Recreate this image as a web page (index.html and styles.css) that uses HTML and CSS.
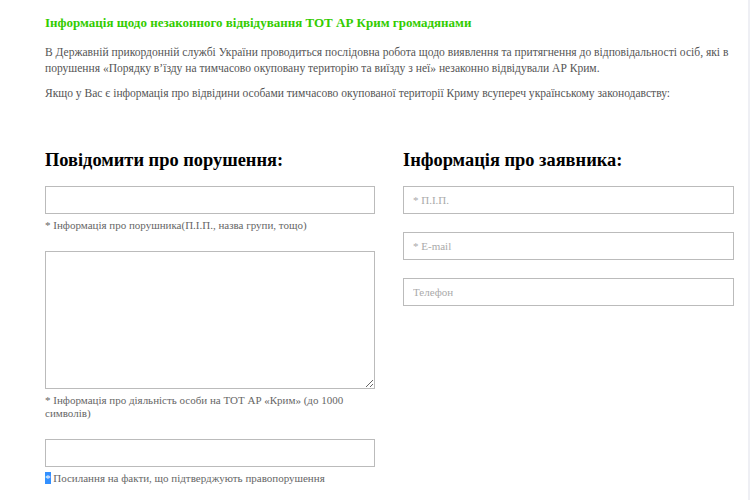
FILE: index.html
```html
<!DOCTYPE html>
<html lang="uk">

<head>
    <meta charset="UTF-8">
    <title>Повідомити про порушення</title>
    <link rel="stylesheet" href="styles.css">
</head>

<body>
    <div class="page">
        <div class="intro">
            <h3>Інформація щодо незаконного відвідування ТОТ АР Крим громадянами</h3>
            <p>В Державній прикордонній службі України проводиться послідовна робота щодо виявлення та притягнення до відповідальності осіб, які в порушення «Порядку в’їзду на тимчасово окуповану територію та виїзду з неї» незаконно відвідували АР Крим.</p>
            <p>Якщо у Вас є інформація про відвідини особами тимчасово окупованої території Криму всупереч українському законодавству:</p>
        </div>

        <form class="report-form">
            <!-- ліва колонка -->
            <div class="col">
                <h2>Повідомити про порушення:</h2>
                <div class="field">
                    <input type="text">
                    <span class="hint">* Інформація про порушника(П.І.П., назва групи, тощо)</span>
                </div>
                <div class="field">
                    <textarea></textarea>
                    <span class="hint">* Інформація про діяльність особи на ТОТ АР «Крим» (до 1000 символів)</span>
                </div>
                <div class="field">
                    <input type="text">
                    <span class="hint"><mark>*</mark> Посилання на факти, що підтверджують правопорушення</span>
                </div>
            </div>

            <!-- права колонка -->
            <div class="col">
                <h2>Інформація про заявника:</h2>
                <div class="contacts">
                    <input type="text" placeholder="* П.І.П.">
                    <input type="email" placeholder="* E-mail">
                    <input type="tel" placeholder="Телефон">
                </div>
            </div>
        </form>
    </div>
</body>

</html>
```

FILE: styles.css
```css
body {
    margin: 0;
    font-family: "Liberation Serif", serif;
    background-color: #fff;
}

.page {
    min-height: 500px;
    box-sizing: border-box;
    padding: 15px 12px 0 45px;
    border-right: 2px solid #eeeff4;
}

.intro h3 {
    margin: 0 0 13px;
    font-size: 13px;
    color: #33cc00;
}

.intro p {
    margin: 0 0 9px;
    font-size: 11.55px;
    line-height: 16px;
    color: #555;
}

.report-form {
    display: grid;
    grid-template-columns: 330px 331px;
    column-gap: 28px;
    margin-top: 47px;
}

.col h2 {
    margin: 0 0 14px;
    font-size: 18.4px;
    line-height: 24px;
    color: #000;
}

.field {
    margin-bottom: 19px;
}

input, textarea {
    display: block;
    width: 100%;
    box-sizing: border-box;
    margin: 0;
    border: 1px solid #bbb;
    border-radius: 0;
    font-family: "Liberation Serif", serif;
    font-size: 11px;
    color: #555;
}

input {
    height: 28px;
    padding: 0 9px;
}

textarea {
    height: 138px;
    resize: vertical;
}

input::placeholder {
    color: #aaa;
}

.hint {
    display: block;
    margin-top: 5px;
    font-size: 11px;
    line-height: 13px;
    color: #666;
}

.hint mark {
    background-color: #3390ff;
    color: #fff;
}

.contacts {
    display: flex;
    flex-direction: column;
    gap: 18px;
}
```
